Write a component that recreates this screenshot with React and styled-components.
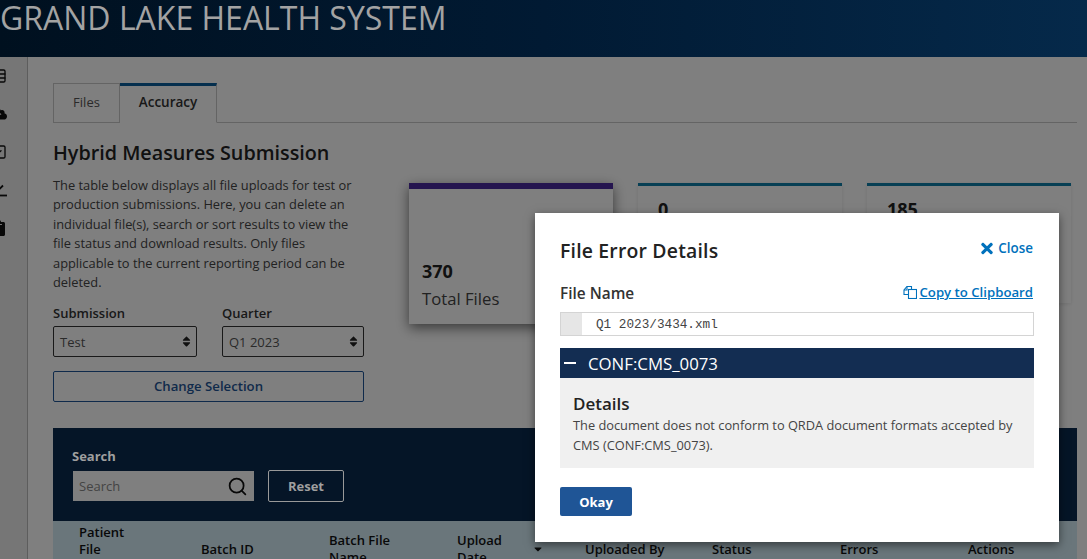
import React from "react";
import styled, { createGlobalStyle } from "styled-components";
import { FaCloudUploadAlt, FaClipboard, FaTimes, FaSort, FaCaretDown } from "react-icons/fa";
import { Search as SearchIcon, Table, SquareCheck } from "lucide-react";

const Global = createGlobalStyle`
  html, body { margin: 0; padding: 0; overflow: hidden; }
  body { font-family: "Open Sans", "Liberation Sans", sans-serif; color: #333; background: #fff; }
  * { box-sizing: border-box; }
`;
const Page = styled.div`position: relative; width: 1087px; height: 559px; overflow: hidden; display: flex; flex-direction: column;`;
const Header = styled.header`
  position: relative; z-index: 3; height: 57px; flex: none; overflow: hidden;
  background: linear-gradient(90deg, #00101f 0%, #011a33 50%, #05294a 100%);
  color: #a3a3a3; font-size: 32px; line-height: 35px; white-space: nowrap;
`;
const Body = styled.div`display: flex; flex: 1; min-height: 0;`;
const Sidebar = styled.nav`
  width: 28px; flex: none; background: #ececec; border-right: 1px solid #bbb; display: flex; flex-direction: column;
  align-items: flex-end; padding: 11px 20px 0 0; gap: 22px; overflow: hidden; color: #111;
  svg { flex: none; width: 16px; height: 16px; }
`;
const Main = styled.main`flex: 1; padding: 26px 10px 0 25px; min-width: 0;`;
const Tabs = styled.div`display: flex; border-bottom: 1px solid #c8c8c8; height: 40px;`;
const Tab = styled.div`
  width: ${p => p.$w}px; height: 40px; display: flex; align-items: center; justify-content: center;
  padding-bottom: ${p => p.$active ? 4 : 2}px;
  border: 1px solid #c8c8c8; border-bottom: ${p => p.$active ? "1px solid #fff" : "1px solid #c8c8c8"};
  border-top: ${p => p.$active ? "3px solid #0a5e9c" : "1px solid #c8c8c8"};
  border-left: ${p => p.$active ? "0" : "1px solid #c8c8c8"};
  font-size: ${p => p.$active ? 13.5 : 13}px;
  font-weight: ${p => p.$active ? 600 : 400}; color: ${p => p.$active ? "#333" : "#555"};
`;
const Columns = styled.div`display: grid; grid-template-columns: 311px 1fr; column-gap: 45px;`;
const Left = styled.section``;
const Title = styled.h1`margin: 16px 0 10px; font-size: 19.75px; line-height: 27px; font-weight: 600; color: #222;`;
const Para = styled.p`margin: 0; font-size: 12.85px; line-height: 19.4px; color: #444; width: 305px;`;
const Selects = styled.div`display: grid; grid-template-columns: 144px 142px; column-gap: 25px; margin-top: 12px;`;
const Label = styled.label`display: block; font-size: 13px; line-height: 18px; font-weight: 600; color: #333; margin-bottom: 4px;`;
const Select = styled.div`
  height: 31px; border: 1px solid #333; border-radius: 2px; padding: 0 4px 0 6px; display: flex; align-items: center; justify-content: space-between;
  font-size: 13px; color: #555; svg { width: 11px; height: 13px; color: #222; }
`;
const OutlineBtn = styled.button`
  display: block; width: 100%; height: 31px; margin-top: 14px; padding: 0 0 2px; background: transparent; border: 1px solid #1f5596; border-radius: 2px;
  font: 600 13.2px "Open Sans", sans-serif; color: #1f5596;
`;
const Cards = styled.div`display: grid; grid-template-columns: repeat(3, 204px); column-gap: 25px; padding-top: 60px; align-items: start;`;
const Card = styled.div`
  height: ${p => p.$tall ? 141 : 120}px; background: #fff; border-top: ${p => p.$tall ? "6px solid #4b2a9e" : "3px solid #0f7fa8"};
  box-shadow: ${p => p.$tall ? "0 4px 12px rgba(0,0,0,.55)" : "0 1px 4px rgba(0,0,0,.1)"}; padding: ${p => p.$tall ? "70px 13px 0" : "11px 20px 0"};
`;
const CardValue = styled.div`font-size: 18px; line-height: 24px; font-weight: 700; color: #222;`;
const CardLabel = styled.div`font-size: 16.7px; line-height: 22px; margin-top: 5px; color: #444;`;
const Panel = styled.section`margin-top: 26px; height: 93px; background: #0b2a4e; padding: 19px 19px 0 20px; color: #fff;`;
const PanelLabel = styled.div`position: relative; z-index: 3; font-size: 13px; line-height: 18px; font-weight: 700; color: #9f9f9f; margin: 0 0 5px -1px;`;
const SearchRow = styled.div`display: flex; align-items: center; gap: 14px;`;
const SearchBox = styled.div`
  width: 181px; height: 30px; background: #fff; display: flex; align-items: center; justify-content: space-between; padding: 0 6px; font-size: 13px; color: #888;
  svg { width: 21px; height: 21px; color: #111; }
`;
const ResetBtn = styled.button`position: relative; z-index: 3; width: 76px; height: 32px; background: transparent; border: 1px solid #999; border-radius: 2px; color: #9f9f9f; font: 700 13px "Open Sans", sans-serif;`;
const HeadRow = styled.div`
  height: 56px; background: #d4ecf6; display: grid; grid-template-columns: 122px 128px 128px 128px 127px 128px 128px 1fr; padding-left: 26px; align-items: center;
  font-size: 13px; line-height: 17px; font-weight: 600; color: #111;
`;
const HeadCell = styled.div`display: flex; align-items: center; gap: 8px; svg { width: 10px; height: 12px; flex: none; }`;
const Wrapped = styled.span`width: ${p => p.$w}px;`;
const Overlay = styled.div`position: absolute; inset: 0; background: rgba(0,0,0,.5); z-index: 2;`;
const Modal = styled.div`
  position: absolute; left: 535px; top: 213px; width: 524px; height: 329px; z-index: 4; background: #fff; padding: 24px 25px 0; box-shadow: 0 3px 9px rgba(0,0,0,.5);
`;
const ModalHead = styled.div`display: flex; justify-content: space-between; align-items: center; height: 28px;`;
const ModalTitle = styled.h2`margin: 0; font-size: 19.4px; line-height: 28px; font-weight: 600; color: #222; letter-spacing: .2px;`;
const CloseLink = styled.a`display: flex; align-items: center; gap: 5px; font-size: 13.4px; font-weight: 600; color: #0071bc; margin: -6px 1px 0 0; svg { width: 12px; height: 17px; }`;
const NameRow = styled.div`display: flex; justify-content: space-between; align-items: center; height: 20px; margin-top: 18px;`;
const NameLabel = styled.div`font-size: 15.4px; font-weight: 600; color: #333;`;
const CopyLink = styled.a`display: flex; align-items: center; gap: 2px; font-size: 13.2px; font-weight: 600; color: #0071bc; text-decoration: underline; margin: -2px 1px 0 0; svg { width: 14px; height: 14px; }`;
const CodeField = styled.div`display: flex; height: 24px; margin-top: 9px; border: 1px solid #d4d4d4; align-items: center; font: 12.7px "Liberation Mono", monospace; color: #444;`;
const Gutter = styled.div`width: 21px; align-self: stretch; background: #e6e6e6; margin-right: 14px;`;
const AccordionHead = styled.div`height: 30px; margin-top: 12px; background: #132d52; color: #fff; display: flex; align-items: center; font-size: 16.8px; padding-left: 4px; gap: 12px;`;
const Minus = styled.span`display: block; width: 12px; height: 2px; background: #fff;`;
const AccordionBody = styled.div`height: 90px; background: #f0f0f0; padding: 14px 13px 0;`;
const DetailTitle = styled.h3`margin: 0; font-size: 17px; line-height: 23px; font-weight: 600; color: #222;`;
const DetailText = styled.p`margin: 0; font-size: 12.8px; line-height: 20px; color: #444;`;
const OkBtn = styled.button`display: block; width: 72px; height: 29px; margin-top: 19px; background: #1f5596; border: 0; border-radius: 2px; color: #fff; font: 700 13px "Open Sans", sans-serif;`;

const CheckLine = () => (
  <svg viewBox="0 0 16 16" fill="none" stroke="currentColor" strokeWidth="1.8">
    <polyline points="2,6 6,9.5 12,3.5" />
    <line x1="0" y1="13.5" x2="16" y2="13.5" />
  </svg>
);
const Clone = () => (
  <svg viewBox="0 0 14 14" fill="none" stroke="currentColor" strokeWidth="1.1">
    <path d="M5.5 9.5H1V5L4 1.5H8.5V4.5" />
    <path d="M4 1.5V5H1" />
    <rect x="5.5" y="4.5" width="8" height="9" />
  </svg>
);

export default function App() {
  return (
    <Page>
      <Global />
      <Header>GRAND LAKE HEALTH SYSTEM</Header>
      <Body>
        <Sidebar>
          <Table /><FaCloudUploadAlt /><SquareCheck /><CheckLine /><FaClipboard />
        </Sidebar>
        <Main>
          <Tabs>
            <Tab $w={67}>Files</Tab>
            <Tab $w={97} $active>Accuracy</Tab>
          </Tabs>
          <Columns>
            <Left>
              <Title>Hybrid Measures Submission</Title>
              <Para>The table below displays all file uploads for test or production submissions. Here, you can delete an individual file(s), search or sort results to view the file status and download results. Only files applicable to the current reporting period can be deleted.</Para>
              <Selects>
                <div><Label>Submission</Label><Select>Test<FaSort /></Select></div>
                <div><Label>Quarter</Label><Select>Q1 2023<FaSort /></Select></div>
              </Selects>
              <OutlineBtn>Change Selection</OutlineBtn>
            </Left>
            <Cards>
              <Card $tall><CardValue>370</CardValue><CardLabel>Total Files</CardLabel></Card>
              <Card><CardValue>0</CardValue></Card>
              <Card><CardValue>185</CardValue></Card>
            </Cards>
          </Columns>
          <Panel>
            <PanelLabel>Search</PanelLabel>
            <SearchRow>
              <SearchBox>Search<SearchIcon /></SearchBox>
              <ResetBtn>Reset</ResetBtn>
            </SearchRow>
          </Panel>
          <HeadRow>
            <HeadCell><Wrapped $w={52}>Patient File Name</Wrapped></HeadCell>
            <HeadCell>Batch ID</HeadCell>
            <HeadCell><Wrapped $w={68}>Batch File Name</Wrapped></HeadCell>
            <HeadCell><Wrapped $w={68}>Upload Date</Wrapped><FaCaretDown /></HeadCell>
            <HeadCell>Uploaded By</HeadCell>
            <HeadCell>Status</HeadCell>
            <HeadCell>Errors</HeadCell>
            <HeadCell>Actions</HeadCell>
          </HeadRow>
        </Main>
      </Body>
      <Overlay />
      <Modal>
        <ModalHead>
          <ModalTitle>File Error Details</ModalTitle>
          <CloseLink><FaTimes />Close</CloseLink>
        </ModalHead>
        <NameRow>
          <NameLabel>File Name</NameLabel>
          <CopyLink><Clone />Copy to Clipboard</CopyLink>
        </NameRow>
        <CodeField><Gutter />Q1 2023/3434.xml</CodeField>
        <AccordionHead><Minus />CONF:CMS_0073</AccordionHead>
        <AccordionBody>
          <DetailTitle>Details</DetailTitle>
          <DetailText>The document does not conform to QRDA document formats accepted by CMS (CONF:CMS_0073).</DetailText>
        </AccordionBody>
        <OkBtn>Okay</OkBtn>
      </Modal>
    </Page>
  );
}
